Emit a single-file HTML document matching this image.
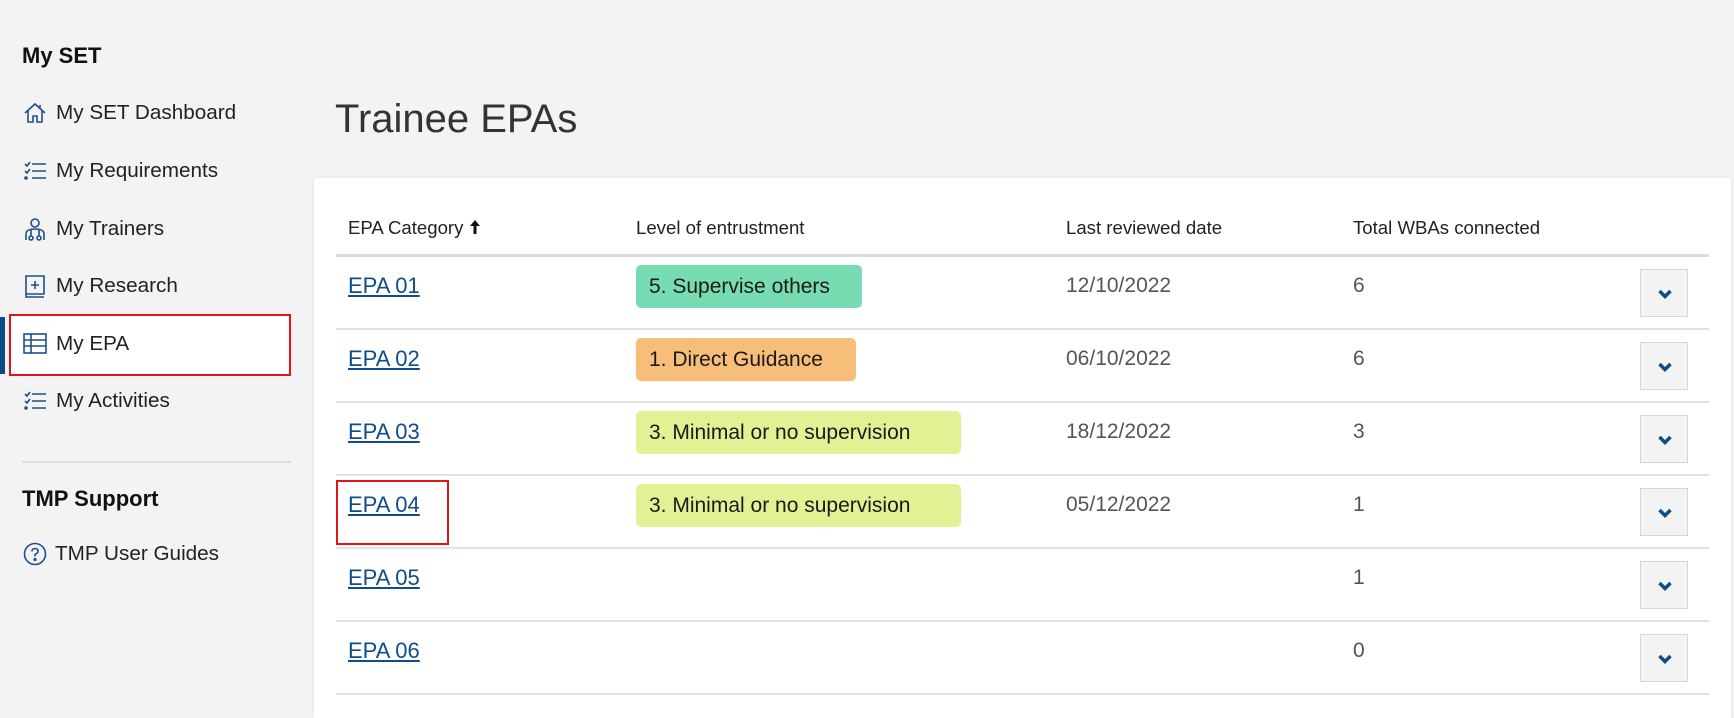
<!DOCTYPE html>
<html><head><meta charset="utf-8"><style>
*{margin:0;padding:0;box-sizing:border-box}
body{width:1734px;height:706px;background:#f3f3f3;font-family:"Liberation Sans",sans-serif;position:relative;overflow:hidden;color:#222}
.a{position:absolute;white-space:nowrap}
.h{font-size:22px;font-weight:bold;color:#111}
.nav{font-size:20.7px;color:#222;left:56px;line-height:24px}
.ic{position:absolute;left:23px;width:24px;height:24px}
.card{position:absolute;left:314px;top:178px;width:1417px;height:540px;background:#fff;box-shadow:0 0 3px rgba(0,0,0,.08)}
.th{font-size:18.6px;color:#222;top:217px;line-height:22px}
.ln{position:absolute;left:336px;width:1373px;height:2px;background:#e2e2e2}
.lk{font-size:22px;color:#0f4c8a;text-decoration:underline;left:348px;line-height:26px}
.bd{position:absolute;left:636px;height:43px;border-radius:5px;font-size:21px;line-height:43px;padding-left:13px;color:#1a1a1a}
.dt{font-size:21px;color:#555;left:1066px;line-height:26px}
.nm{font-size:21px;color:#555;left:1353px;line-height:26px}
.bt{position:absolute;left:1640px;width:48px;height:48px;background:#f3f3f3;border:1px solid #d6d6d6}
.bt svg{position:absolute;left:17px;top:19px}
</style></head><body>
<div class="a h" style="left:22px;top:43px">My SET</div>

<svg class="ic" style="top:101px" viewBox="0 0 24 24" fill="none" stroke="#1d4f8c" stroke-width="1.6"><path d="M2 12 L12 3 L22 12 M5 10 V21 H10 V15 H14 V21 H19 V10 M17 4 V8"/></svg>
<div class="a nav" style="top:101px">My SET Dashboard</div>
<svg class="ic" style="top:159px" viewBox="0 0 24 24" fill="none" stroke="#1d4f8c" stroke-width="1.6"><path d="M2 5 L4 7 L7 3 M2 12 L4 14 L7 10 M9 5 H23 M9 12 H23 M9 19 H23"/><circle cx="3" cy="19" r="1" fill="#1d4f8c"/></svg>
<div class="a nav" style="top:159px">My Requirements</div>
<svg class="ic" style="top:217px" viewBox="0 0 24 24" fill="none" stroke="#1d4f8c" stroke-width="1.6"><circle cx="12" cy="6" r="4"/><path d="M3 23 V17 Q3 12 12 12 Q21 12 21 17 V23 M8 13 V19 M16 13 V19"/><circle cx="8" cy="21" r="2"/><circle cx="16" cy="21" r="2"/></svg>
<div class="a nav" style="top:217px">My Trainers</div>
<svg class="ic" style="top:274px" viewBox="0 0 24 24" fill="none" stroke="#1d4f8c" stroke-width="1.6"><path d="M3 2 H21 V20 H3 Z M3 20 V23 H21 M12 7 V15 M8 11 H16"/></svg>
<div class="a nav" style="top:274px">My Research</div>

<div class="a" style="left:0;top:317px;width:5px;height:57px;background:#0d4a85"></div>
<div class="a" style="left:9px;top:314px;width:282px;height:62px;background:#fff;border:2px solid #e3141c"></div>
<svg class="ic" style="top:332px" viewBox="0 0 24 24" fill="none" stroke="#1d4f8c" stroke-width="1.6"><rect x="1" y="2" width="22" height="19"/><path d="M1 8 H23 M1 14 H23 M8 2 V21"/></svg>
<div class="a nav" style="top:332px">My EPA</div>
<svg class="ic" style="top:389px" viewBox="0 0 24 24" fill="none" stroke="#1d4f8c" stroke-width="1.6"><path d="M2 5 L4 7 L7 3 M2 12 L4 14 L7 10 M9 5 H23 M9 12 H23 M9 19 H23"/><circle cx="3" cy="19" r="1" fill="#1d4f8c"/></svg>
<div class="a nav" style="top:389px">My Activities</div>

<div class="a" style="left:22px;top:461px;width:269px;height:2px;background:#ddd"></div>
<div class="a h" style="left:22px;top:486px">TMP Support</div>
<svg class="ic" style="top:542px" viewBox="0 0 24 24" fill="none" stroke="#1d4f8c" stroke-width="1.6"><circle cx="12" cy="12" r="10.5"/><path d="M9 9.5 Q9 6.5 12 6.5 Q15 6.5 15 9.3 Q15 11 12 12.5 V14.5"/><circle cx="12" cy="17.5" r="0.8" fill="#1d4f8c"/></svg>
<div class="a nav" style="left:55px;top:542px">TMP User Guides</div>

<div class="a" style="left:335px;top:97px;font-size:40px;color:#333">Trainee EPAs</div>

<div class="card"></div>
<div class="a th" style="left:348px">EPA Category <svg width="12" height="16" viewBox="0 0 12 16" style="vertical-align:-1px"><path d="M6 1 L11 7 H7.5 V15 H4.5 V7 H1 Z" fill="#111"/></svg></div>
<div class="a th" style="left:636px">Level of entrustment</div>
<div class="a th" style="left:1066px">Last reviewed date</div>
<div class="a th" style="left:1353px">Total WBAs connected</div>
<div class="ln" style="top:254px;height:3px;background:#dcdcdc"></div>

<div class="a lk" style="top:273px">EPA 01</div>
<div class="bd" style="top:265px;width:226px;background:#77dcb2">5. Supervise others</div>
<div class="a dt" style="top:273px">12/10/2022</div>
<div class="a nm" style="top:273px">6</div>
<div class="bt" style="top:269px"><svg width="14" height="10" viewBox="0 0 14 10"><path d="M1.5 2 L7 7.5 L12.5 2" stroke="#0f4c8a" stroke-width="3.5" fill="none"/></svg></div>
<div class="ln" style="top:328px"></div>

<div class="a lk" style="top:346px">EPA 02</div>
<div class="bd" style="top:338px;width:220px;background:#f6be78">1. Direct Guidance</div>
<div class="a dt" style="top:346px">06/10/2022</div>
<div class="a nm" style="top:346px">6</div>
<div class="bt" style="top:342px"><svg width="14" height="10" viewBox="0 0 14 10"><path d="M1.5 2 L7 7.5 L12.5 2" stroke="#0f4c8a" stroke-width="3.5" fill="none"/></svg></div>
<div class="ln" style="top:401px"></div>

<div class="a lk" style="top:419px">EPA 03</div>
<div class="bd" style="top:411px;width:325px;background:#e3f094">3. Minimal or no supervision</div>
<div class="a dt" style="top:419px">18/12/2022</div>
<div class="a nm" style="top:419px">3</div>
<div class="bt" style="top:415px"><svg width="14" height="10" viewBox="0 0 14 10"><path d="M1.5 2 L7 7.5 L12.5 2" stroke="#0f4c8a" stroke-width="3.5" fill="none"/></svg></div>
<div class="ln" style="top:474px"></div>

<div class="a" style="left:336px;top:480px;width:113px;height:65px;border:2px solid #e3141c"></div>
<div class="a lk" style="top:492px">EPA 04</div>
<div class="bd" style="top:484px;width:325px;background:#e3f094">3. Minimal or no supervision</div>
<div class="a dt" style="top:492px">05/12/2022</div>
<div class="a nm" style="top:492px">1</div>
<div class="bt" style="top:488px"><svg width="14" height="10" viewBox="0 0 14 10"><path d="M1.5 2 L7 7.5 L12.5 2" stroke="#0f4c8a" stroke-width="3.5" fill="none"/></svg></div>
<div class="ln" style="top:547px"></div>

<div class="a lk" style="top:565px">EPA 05</div>
<div class="a nm" style="top:565px">1</div>
<div class="bt" style="top:561px"><svg width="14" height="10" viewBox="0 0 14 10"><path d="M1.5 2 L7 7.5 L12.5 2" stroke="#0f4c8a" stroke-width="3.5" fill="none"/></svg></div>
<div class="ln" style="top:620px"></div>

<div class="a lk" style="top:638px">EPA 06</div>
<div class="a nm" style="top:638px">0</div>
<div class="bt" style="top:634px"><svg width="14" height="10" viewBox="0 0 14 10"><path d="M1.5 2 L7 7.5 L12.5 2" stroke="#0f4c8a" stroke-width="3.5" fill="none"/></svg></div>
<div class="ln" style="top:693px"></div>
</body></html>
